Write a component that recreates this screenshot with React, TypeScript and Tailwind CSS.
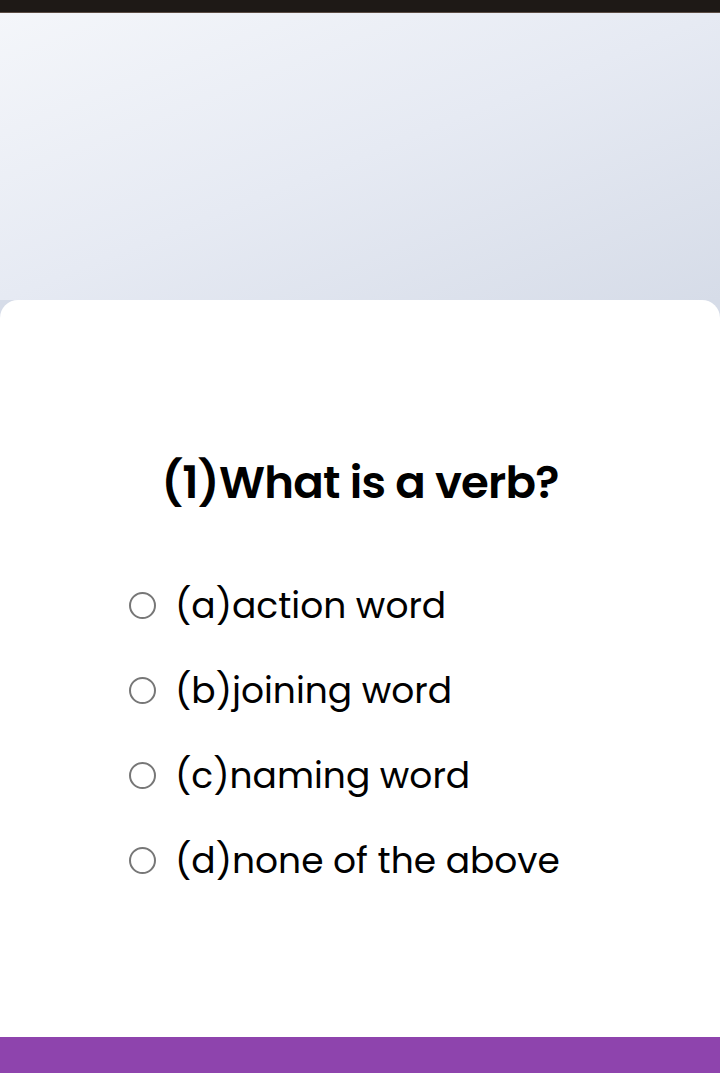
import React from "react";

const options = [
    "(a)action word",
    "(b)joining word",
    "(c)naming word",
    "(d)none of the above",
];

export default function App() {
    const [selected, setSelected] = React.useState<number | null>(null);

    return (
        <div
            className="flex h-[1073px] w-full flex-col overflow-hidden bg-white text-black"
            style={{ fontFamily: "Poppins, 'Noto Sans', Inter, sans-serif" }}
        >
            <div className="h-[12px] w-full shrink-0 bg-[#1e1916]" />
            <div className="h-[1px] w-full shrink-0 bg-[#5b4c44]" />
            <div className="h-[287px] w-full shrink-0 bg-gradient-to-br from-[#f4f6fa] via-[#e6eaf3] to-[#d6dce8]" />
            <div className="flex-1 bg-[#d6dce8]">
                <div className="flex h-full flex-col rounded-t-[18px] bg-white">
                    <h1 className="mt-[153px] text-center text-[45px] font-semibold leading-[60px] tracking-[-0.75px]">
                        (1)What is a verb?
                    </h1>
                    <div className="mt-[50px] flex flex-col pl-[129px]">
                        {options.map((opt, i) => (
                            <label
                                key={opt}
                                className="flex h-[85px] cursor-pointer items-center gap-[19px]"
                                onClick={() => setSelected(i)}
                            >
                                <span className="flex h-[27px] w-[27px] items-center justify-center rounded-full border-[2px] border-[#777777]">
                                    {selected === i && <span className="h-[13px] w-[13px] rounded-full bg-[#777777]" />}
                                </span>
                                <span className="text-[36px] leading-[52px]">{opt}</span>
                            </label>
                        ))}
                    </div>
                </div>
            </div>
            <div className="h-[36px] w-full shrink-0 bg-[#8e44ad]" />
        </div>
    );
}
